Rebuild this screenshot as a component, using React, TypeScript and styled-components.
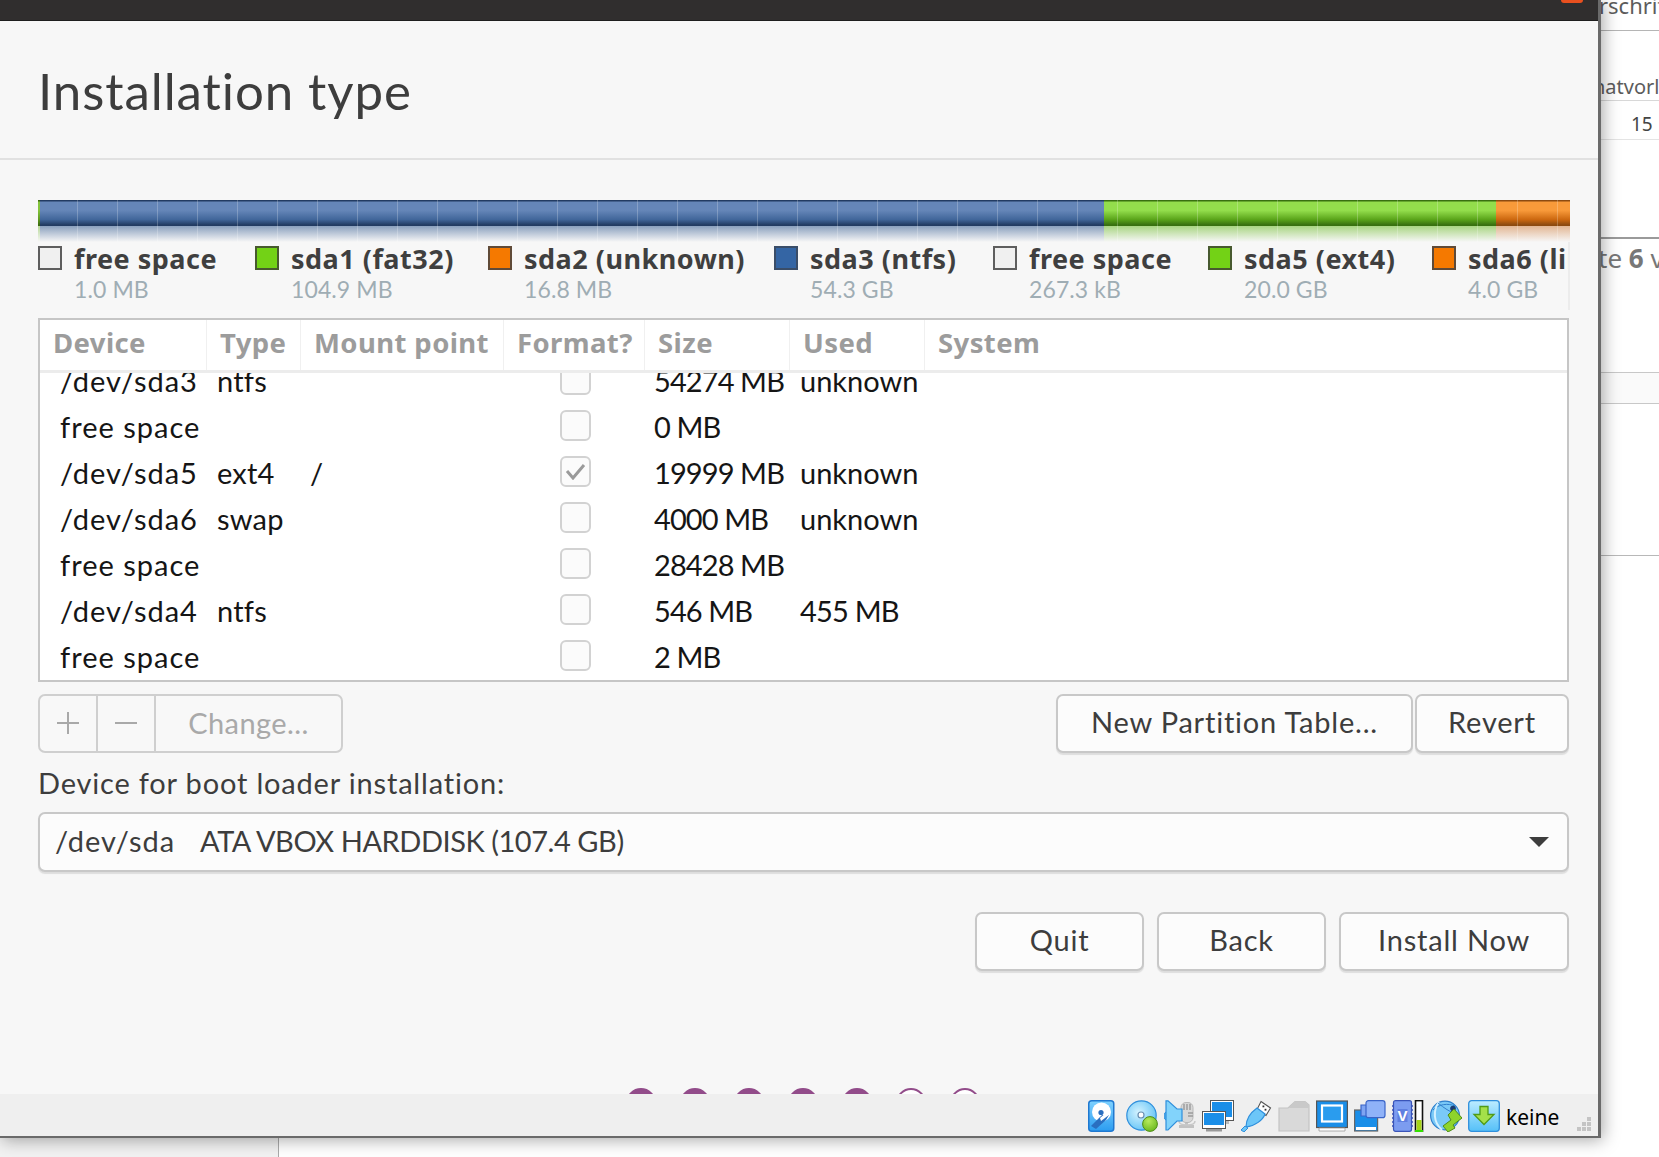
import React from "react";
import styled, { createGlobalStyle } from "styled-components";

const UI = `"Lato", "Noto Sans", sans-serif`;

const Global = createGlobalStyle`
  html, body { margin: 0; padding: 0; background: #fff; }
  body { font-family: ${UI}; overflow: hidden; }
`;

const Page = styled.div`
  width: 1659px;
  height: 1157px;
  display: flex;
  flex-direction: column;
  overflow: hidden;
`;
const Upper = styled.div`
  display: flex;
  height: 1138px;
`;
const Win = styled.div`
  position: relative;
  z-index: 2;
  width: 1598px;
  height: 1136px;
  flex: none;
  display: flex;
  flex-direction: column;
  background: #f7f7f7;
  border-right: 3px solid #6a6a6a;
  border-bottom: 2px solid #6a6a6a;
  box-shadow: 2px 2px 16px rgba(0, 0, 0, 0.35);
`;
const TitleBar = styled.div`
  height: 20px;
  flex: none;
  background: #302e2e;
  border-bottom: 1px solid #1e1e1e;
  display: flex;
  justify-content: flex-end;
  padding-right: 15px;
`;
const CloseHint = styled.div`
  width: 22px;
  height: 3px;
  background: #e8501f;
  border-radius: 0 0 11px 11px;
`;
const Header = styled.header`
  height: 137px;
  flex: none;
  padding-left: 38px;
  display: flex;
  align-items: center;
  border-bottom: 2px solid #e1e1e1;
  box-sizing: content-box;
`;
const Title = styled.h1`
  margin: 2px 0 0;
  font-size: 51px;
  font-weight: 400;
  color: #3d3d3d;
  letter-spacing: 0.92px;
  line-height: 60px;
`;
const Content = styled.main`
  flex: 1;
  display: flex;
  flex-direction: column;
  padding: 40px 29px 0 38px;
  min-height: 0;
`;

const Bar = styled.div`
  position: relative;
  height: 42px;
  flex: none;
  &::after {
    content: "";
    position: absolute;
    inset: 0;
    background: repeating-linear-gradient(
      to right,
      transparent 0,
      transparent 39px,
      rgba(255, 255, 255, 0.22) 39px,
      rgba(255, 255, 255, 0.22) 40px
    );
  }
`;
const BarRow = styled.div`
  display: flex;
  height: 26px;
`;
const ReflectRow = styled.div`
  display: flex;
  height: 16px;
`;
const BarSeg = styled.div<{ $w: number; $hi: string; $mid: string; $lo: string }>`
  width: ${(p) => p.$w}px;
  flex: none;
  background: linear-gradient(
    to bottom,
    ${(p) => p.$lo} 0,
    ${(p) => p.$lo} 1px,
    ${(p) => p.$hi} 2px,
    ${(p) => p.$hi} 40%,
    ${(p) => p.$mid} 75%,
    ${(p) => p.$lo} 96%,
    ${(p) => p.$lo} 100%
  );
`;
const ReflectSeg = styled.div<{ $w: number; $c: string }>`
  width: ${(p) => p.$w}px;
  flex: none;
  position: relative;
  background: ${(p) => p.$c};
  &::after {
    content: "";
    position: absolute;
    inset: 0;
    background: linear-gradient(to bottom, rgba(247, 247, 247, 0.3), #f7f7f7 100%);
  }
`;

const Legend = styled.div`
  display: flex;
  height: 64px;
  padding-top: 4px;
  flex: none;
  overflow: hidden;
  border-right: 2px solid #ececec;
  box-sizing: content-box;
  width: 1530px;
`;
const LegendItem = styled.div<{ $w: number }>`
  width: ${(p) => p.$w}px;
  flex: none;
  display: flex;
  gap: 12px;
`;
const Swatch = styled.div<{ $c: string; $edge: string }>`
  width: 24px;
  height: 24px;
  box-sizing: border-box;
  flex: none;
  background: ${(p) => p.$c};
  border: 2px solid ${(p) => p.$edge};
`;
const LegendText = styled.div`
  white-space: nowrap;
  display: flex;
  flex-direction: column;
  margin-top: -4px;
`;
const LegendName = styled.div`
  font-family: "Noto Sans", sans-serif;
  font-weight: 700;
  font-size: 27px;
  letter-spacing: 0.5px;
  line-height: 34px;
  color: #3f3f3f;
`;
const LegendSize = styled.div`
  font-size: 23px;
  letter-spacing: 0.1px;
  line-height: 32px;
  margin-top: -3px;
  color: #9fadb4;
`;

const TableBox = styled.div`
  margin-top: 8px;
  flex: none;
  height: 364px;
  box-sizing: border-box;
  background: #fff;
  border: 2px solid #c6c6c6;
  display: flex;
  flex-direction: column;
  width: 1531px;
`;
const columns = "167px 94px 203px 141px 145px 135px 1fr";
const HeadRow = styled.div`
  height: 50px;
  flex: none;
  display: grid;
  grid-template-columns: ${columns};
  border-bottom: 3px solid #ececec;
  position: relative;
  z-index: 1;
  background: #fff;
`;
const HeadCell = styled.div`
  font-family: "Noto Sans", sans-serif;
  font-weight: 700;
  font-size: 27.5px;
  letter-spacing: 0.4px;
  color: #9c9c9c;
  line-height: 46px;
  padding-left: 13px;
  border-right: 1px solid #f0f0f0;
  white-space: nowrap;
  overflow: hidden;
  &:last-child { border-right: 0; }
`;
const Rows = styled.div`
  flex: 1;
  min-height: 0;
  overflow: hidden;
`;
const RowsInner = styled.div`
  margin-top: -16px;
`;
const Row = styled.div`
  display: grid;
  grid-template-columns: ${columns};
  height: 46px;
  align-items: center;
  font-size: 29px;
  color: #151515;
`;
const Cell = styled.div<{ $pad: number; $ls?: number }>`
  padding-left: ${(p) => p.$pad}px;
  letter-spacing: ${(p) => p.$ls ?? 0}px;
  white-space: nowrap;
`;
const Check = styled.div`
  width: 31px;
  height: 31px;
  box-sizing: border-box;
  border: 2px solid #d2d2d2;
  border-radius: 6px;
  background: #fbfbfb;
  display: flex;
  align-items: center;
  justify-content: center;
  margin-top: -2px;
`;

const Tools = styled.div`
  margin-top: 12px;
  height: 59px;
  flex: none;
  display: flex;
  justify-content: space-between;
  width: 1531px;
`;
const Group = styled.div`
  display: flex;
  gap: 2px;
`;
const BtnGroup = styled.div`
  display: flex;
  width: 305px;
  box-sizing: border-box;
  border: 2px solid #cfcfcf;
  border-radius: 7px;
  background: #f8f8f8;
`;
const GroupPart = styled.div<{ $w?: number }>`
  ${(p) => (p.$w ? `width: ${p.$w}px; flex: none;` : "flex: 1;")}
  display: flex;
  align-items: center;
  justify-content: center;
  font-size: 29px;
  letter-spacing: 0.4px;
  padding-bottom: 2px;
  color: #a9a9a9;
  border-right: 2px solid #cfcfcf;
  &:last-child { border-right: 0; }
`;
const Btn = styled.button<{ $w: number }>`
  width: ${(p) => p.$w}px;
  box-sizing: border-box;
  height: 59px;
  padding: 0 0 4px;
  font-family: ${UI};
  font-size: 29px;
  letter-spacing: 0.8px;
  color: #3d3d3d;
  background: #fcfcfc;
  border: 2px solid #c8c8c8;
  border-radius: 7px;
  box-shadow: 0 2px 1px rgba(0, 0, 0, 0.1);
`;
const Label = styled.div`
  margin-top: 12px;
  height: 36px;
  line-height: 36px;
  font-size: 29px;
  letter-spacing: 0.82px;
  color: #3d3d3d;
`;
const Combo = styled.div`
  margin-top: 11px;
  width: 1531px;
  height: 60px;
  flex: none;
  box-sizing: border-box;
  display: flex;
  align-items: center;
  padding: 0 18px 3px 15px;
  border: 2px solid #c8c8c8;
  border-radius: 7px;
  background: #fcfcfc;
  box-shadow: 0 2px 1px rgba(0, 0, 0, 0.1);
  font-size: 29px;
  color: #3d3d3d;
`;
const ComboDev = styled.span`
  width: 145px;
  flex: none;
  letter-spacing: 1px;
`;
const ComboName = styled.span`
  flex: 1;
  letter-spacing: -0.45px;
`;
const Arrow = styled.div`
  width: 0;
  height: 0;
  margin-top: 3px;
  border-left: 10px solid transparent;
  border-right: 10px solid transparent;
  border-top: 10px solid #3d3d3d;
`;
const Nav = styled.div`
  margin-top: 40px;
  width: 1531px;
  display: flex;
  justify-content: flex-end;
  gap: 13px;
  flex: none;
`;
const Dots = styled.div`
  margin-top: auto;
  height: 6px;
  overflow: hidden;
  display: flex;
  gap: 24px;
  padding-left: 588px;
  flex: none;
`;
const Dot = styled.div<{ $on?: boolean }>`
  width: 30px;
  height: 30px;
  flex: none;
  border-radius: 50%;
  box-sizing: border-box;
  background: ${(p) => (p.$on ? "#924c8a" : "#fff")};
  border: 2px solid #924c8a;
`;
const Status = styled.footer`
  height: 42px;
  flex: none;
  background: #efefef;
  display: flex;
  align-items: center;
  justify-content: flex-end;
  gap: 6px;
  padding-right: 6px;
`;
const Slot = styled.svg`
  width: 32px;
  height: 32px;
  flex: none;
  margin-top: 2px;
`;
const Keine = styled.span`
  font-family: "Noto Sans", sans-serif;
  font-size: 21px;
  line-height: 30px;
  margin-top: 3px;
  color: #000;
  width: 51px;
  white-space: nowrap;
`;
const Grip = styled.svg`
  width: 16px;
  height: 16px;
  margin-left: 13px;
  align-self: flex-end;
  margin-bottom: 4px;
  flex: none;
`;

const Side = styled.aside`
  flex: 1;
  min-width: 0;
  overflow: hidden;
  display: flex;
  flex-direction: column;
  background: #fff;
  color: #5c5c5c;
  font-family: "Noto Sans", sans-serif;
  white-space: nowrap;
`;
const SideTop = styled.div`
  height: 30px;
  flex: none;
  border-bottom: 1px solid #b5b5b5;
  font-size: 22px;
  line-height: 26px;
  & > span { display: block; margin-left: -2px; margin-top: -8px; }
`;
const SideFmt = styled.div`
  height: 70px;
  flex: none;
  border-bottom: 1px solid #d8d8d8;
  font-size: 20px;
  display: flex;
  align-items: flex-end;
  box-sizing: border-box;
  & > span { margin-left: -8px; }
`;
const SideRuler = styled.div`
  margin-top: 5px;
  height: 34px;
  flex: none;
  border-bottom: 1px solid #e4e4e4;
  display: flex;
  align-items: center;
  font-size: 19px;
  color: #444;
  padding-left: 30px;
  padding-top: 2px;
  box-sizing: border-box;
`;
const SideGap = styled.div<{ $h: number }>`
  height: ${(p) => p.$h}px;
  flex: none;
`;
const SideRule = styled.div<{ $h: number; $c: string }>`
  height: ${(p) => p.$h}px;
  flex: none;
  background: ${(p) => p.$c};
`;
const SideHeading = styled.div`
  height: 42px;
  line-height: 38px;
  flex: none;
  font-size: 26px;
  color: #777;
  & > span { margin-left: -3px; }
  & b { font-weight: 700; }
`;
const SideBand = styled.div`
  height: 30px;
  flex: none;
  background: #fafafa;
`;
const Lower = styled.div`
  flex: 1;
  display: flex;
`;
const LowerLeft = styled.div`
  width: 278px;
  flex: none;
  background: #f2f2f2;
  border-right: 1px solid #aaa;
`;

const partitions = [
  { dev: "/dev/sda3", type: "ntfs", size: "54274 MB", used: "unknown" },
  { dev: "free space", size: "0 MB" },
  { dev: "/dev/sda5", type: "ext4", mount: "/", checked: true, size: "19999 MB", used: "unknown" },
  { dev: "/dev/sda6", type: "swap", size: "4000 MB", used: "unknown" },
  { dev: "free space", size: "28428 MB" },
  { dev: "/dev/sda4", type: "ntfs", size: "546 MB", used: "455 MB" },
  { dev: "free space", size: "2 MB" },
];

const FREE = { c: "#f0f0f0", e: "#5e5e5e" };
const GREEN = { c: "#73d216", e: "#47592f" };
const ORANGE = { c: "#f57900", e: "#5f4a38" };
const BLUE = { c: "#3465a4", e: "#3a4d68" };
const legend = [
  { name: "free space", size: "1.0 MB", w: 217, ...FREE },
  { name: "sda1 (fat32)", size: "104.9 MB", w: 233, ...GREEN },
  { name: "sda2 (unknown)", size: "16.8 MB", w: 286, ...ORANGE },
  { name: "sda3 (ntfs)", size: "54.3 GB", w: 219, ...BLUE },
  { name: "free space", size: "267.3 kB", w: 215, ...FREE },
  { name: "sda5 (ext4)", size: "20.0 GB", w: 224, ...GREEN },
  { name: "sda6 (linux-swap)", size: "4.0 GB", w: 300, ...ORANGE },
];

const segs = [
  { w: 2, hi: "#84c43c", mid: "#5f9a20", lo: "#3c6a10", re: "#9ccb70" },
  { w: 1064, hi: "#6586b8", mid: "#41669a", lo: "#223b62", re: "#5b7aa5" },
  { w: 392, hi: "#93de4c", mid: "#5aa41a", lo: "#387010", re: "#87c650" },
  { w: 74, hi: "#f89a3a", mid: "#cc6810", lo: "#8c4a10", re: "#d99a68" },
];

const numeric = (s?: string) => (s && /^\d/.test(s) ? -0.8 : 0);

const HdIcon = () => (
  <Slot viewBox="0 0 32 32">
    <defs>
      <linearGradient id="b1" x1="0" y1="0" x2="0" y2="1">
        <stop offset="0" stopColor="#7fd2ff" />
        <stop offset="1" stopColor="#2b9cf0" />
      </linearGradient>
    </defs>
    <rect x="0.75" y="0.75" width="25" height="30.5" rx="3" fill="url(#b1)" stroke="#1f78d0" strokeWidth="1.5" />
    <circle cx="13.5" cy="12" r="9.5" fill="#fff" />
    <circle cx="13" cy="12.5" r="2.6" fill="#2a6fc0" />
    <path d="M3 26 L14 15 L21 15 L18 20 L8 29 Z" fill="#2a6fc0" />
    <path d="M13 21 L21 15 L19 12 L12 18 Z" fill="#fff" />
  </Slot>
);
const CdIcon = () => (
  <Slot viewBox="0 0 32 32">
    <defs>
      <radialGradient id="cd1" cx="0.4" cy="0.4" r="0.7">
        <stop offset="0" stopColor="#d4f3ff" />
        <stop offset="1" stopColor="#5dc0f5" />
      </radialGradient>
      <radialGradient id="g1" cx="0.4" cy="0.3" r="0.8">
        <stop offset="0" stopColor="#b6ea5c" />
        <stop offset="1" stopColor="#64b41a" />
      </radialGradient>
    </defs>
    <circle cx="15.5" cy="15.5" r="14.7" fill="url(#cd1)" stroke="#2f8fdc" strokeWidth="1.2" />
    <circle cx="15" cy="15" r="3" fill="#fff" stroke="#6a8fb0" strokeWidth="1.2" />
    <circle cx="24" cy="24" r="7.4" fill="url(#g1)" stroke="#4e8d18" />
  </Slot>
);
const AudioIcon = () => (
  <Slot viewBox="0 0 32 32">
    <rect x="17" y="2.5" width="12" height="20" rx="5" fill="#d8d8d8" stroke="#b8b8b8" />
    <path d="M20 4v6M23 4v6M26 4v6M24 13h5M24 16h5" stroke="#9a9a9a" strokeWidth="1.4" />
    <path d="M15 25h15v3H15z M21 23h3v3h-3z" fill="#c2c2c2" />
    <path d="M15 21c0 3 4 4 8 4s8-1 8-4" fill="none" stroke="#c8c8c8" strokeWidth="1.5" />
    <path d="M2 12 L0.7 13 V19 L2 20 H4 Z" fill="#5cc0f7" stroke="#2f8fdc" />
    <path d="M2 0.8 L4 0.8 L13 9 H18 V21 H13 L4 30 H2 Z" fill="#82d3fb" stroke="#2f8fdc" strokeWidth="1.2" />
  </Slot>
);
const Monitor = ({ x, y, w, h }: { x: number; y: number; w: number; h: number }) => (
  <>
    <rect x={x} y={y} width={w} height={h} fill="#fff" stroke="#555" strokeWidth="1" />
    <rect x={x + 1.5} y={y + 1.5} width={w - 3} height={h - 5} fill="#1a8ee8" />
  </>
);
const NetIcon = () => (
  <Slot viewBox="0 0 32 32">
    <Monitor x={8.5} y={0.5} w={23} h={20} />
    <path d="M12 21h15v3H12z" fill="#bbb" />
    <Monitor x={0.5} y={11.5} w={23} h={17} />
    <path d="M4 29h16v2.5H4z" fill="#999" />
  </Slot>
);
const UsbIcon = () => (
  <Slot viewBox="0 0 32 32">
    <path d="M21 1.5 L30.5 8 L26 15.5 L17 9.5 Z" fill="#fff" stroke="#555" strokeWidth="1.1" />
    <rect x="22.5" y="5.5" width="1.8" height="1.8" fill="#333" />
    <rect x="24.6" y="8.8" width="1.8" height="1.8" fill="#333" />
    <path d="M17 8 L25 14 C23 20 15 26 6 27 C6 20 10 13 17 8 Z" fill="#6cc6f8" stroke="#2f8fdc" strokeWidth="1.2" />
    <path d="M5 26 L8 28 L4 32 L1 30 Z" fill="#6cc6f8" stroke="#2f8fdc" />
  </Slot>
);
const FolderIcon = () => (
  <Slot viewBox="0 0 32 32">
    <path d="M1 8 L10 8 L17 1.5 H27 L31 5 V31 H1 Z" fill="#d9d9d9" stroke="#c4c4c4" strokeWidth="1.2" />
    <path d="M17 1.5 H27 L31 5 V8 H10 Z" fill="#c9c9c9" />
  </Slot>
);
const DisplayIcon = () => (
  <Slot viewBox="0 0 32 32">
    <rect x="0.6" y="1" width="30.8" height="26.5" fill="#1a8ee8" stroke="#555" strokeWidth="1.2" />
    <rect x="6" y="5.5" width="20" height="16" fill="#2a9cee" stroke="#fff" strokeWidth="2.2" />
    <path d="M3 28h26v3H3z" fill="#fff" stroke="#999" strokeWidth="0.8" />
  </Slot>
);
const CaptureIcon = () => (
  <Slot viewBox="0 0 32 32">
    <rect x="0.6" y="10" width="23" height="21" fill="#1a8ee8" stroke="#666" strokeWidth="1.2" />
    <rect x="2" y="27" width="20" height="3" fill="#fff" />
    <path d="M7 5 L13 5 V16 H7 Z" fill="#7ea4f2" stroke="#3a64c8" strokeWidth="1.2" />
    <rect x="12" y="0.7" width="19" height="17" rx="2.5" fill="#8fb2f8" stroke="#3a64c8" strokeWidth="1.2" />
  </Slot>
);
const ChipIcon = () => (
  <Slot viewBox="0 0 32 32">
    <rect x="1.5" y="0.7" width="18" height="30.6" rx="2" fill="#7c9cf0" stroke="#3a54b8" strokeWidth="1.2" />
    <path d="M0 6h1.5M0 10h1.5M0 14h1.5M0 18h1.5M0 22h1.5M0 26h1.5M19.5 6h1.5M19.5 10h1.5M19.5 14h1.5M19.5 18h1.5M19.5 22h1.5M19.5 26h1.5" stroke="#3a54b8" strokeWidth="1.4" />
    <rect x="5.5" y="9" width="10" height="13" fill="#5f7fe0" />
    <text x="10.5" y="21" textAnchor="middle" fontFamily="Liberation Sans, sans-serif" fontWeight="700" fontSize="15" fill="#fff">V</text>
    <rect x="23.5" y="0.6" width="7" height="30.8" fill="#fff" stroke="#111" strokeWidth="1.6" />
    <rect x="24.5" y="20" width="5" height="10.5" fill="#a6d416" />
    <rect x="23" y="30" width="8" height="2" fill="#33e000" />
  </Slot>
);
const GlobeIcon = () => (
  <Slot viewBox="0 0 32 32">
    <circle cx="15" cy="15.5" r="14.4" fill="#7ac9f7" stroke="#2f7fcc" strokeWidth="1.2" />
    <path d="M3 10 C9 4 18 3 25 6" fill="none" stroke="#2f7fcc" />
    <path d="M9 2 C3 10 3 22 12 30" fill="none" stroke="#d6f1ff" strokeWidth="2" />
    <path d="M8 3 C14 8 20 12 26 14" fill="none" stroke="#2f7fcc" />
    <circle cx="23" cy="8.5" r="2.8" fill="#1c3c70" />
    <path d="M24 9 L32 18 L23 25 L25 28 L18 32 L13 26 L21 20 L18 15 Z" fill="#8ed42c" stroke="#4f8c18" />
  </Slot>
);
const DownIcon = () => (
  <Slot viewBox="0 0 32 32">
    <defs>
      <linearGradient id="dl" x1="0" y1="0" x2="0" y2="1">
        <stop offset="0" stopColor="#bcecff" />
        <stop offset="1" stopColor="#55c0f8" />
      </linearGradient>
    </defs>
    <rect x="0.7" y="0.7" width="30.6" height="30.6" rx="3" fill="url(#dl)" stroke="#2f8fdc" strokeWidth="1.3" />
    <path d="M12 6.5 H20 V14.5 H26 L16 24.5 L6 14.5 H12 Z" fill="#a4e04a" stroke="#4f9a18" strokeWidth="1.3" />
  </Slot>
);

export default function App() {
  return (
    <>
      <Global />
      <Page>
        <Upper>
          <Win>
            <TitleBar>
              <CloseHint />
            </TitleBar>
            <Header>
              <Title>Installation type</Title>
            </Header>
            <Content>
              <Bar>
                <BarRow>
                  {segs.map((s, i) => (
                    <BarSeg key={i} $w={s.w} $hi={s.hi} $mid={s.mid} $lo={s.lo} />
                  ))}
                </BarRow>
                <ReflectRow>
                  {segs.map((s, i) => (
                    <ReflectSeg key={i} $w={s.w} $c={s.re} />
                  ))}
                </ReflectRow>
              </Bar>
              <Legend>
                {legend.map((l, i) => (
                  <LegendItem key={i} $w={l.w}>
                    <Swatch $c={l.c} $edge={l.e} />
                    <LegendText>
                      <LegendName>{l.name}</LegendName>
                      <LegendSize>{l.size}</LegendSize>
                    </LegendText>
                  </LegendItem>
                ))}
              </Legend>
              <TableBox>
                <HeadRow>
                  {["Device", "Type", "Mount point", "Format?", "Size", "Used", "System"].map((h) => (
                    <HeadCell key={h}>{h}</HeadCell>
                  ))}
                </HeadRow>
                <Rows>
                  <RowsInner>
                    {partitions.map((p, i) => (
                      <Row key={i}>
                        <Cell $pad={20} $ls={1}>{p.dev}</Cell>
                        <Cell $pad={10} $ls={0.2}>{p.type}</Cell>
                        <Cell $pad={9}>{p.mount}</Cell>
                        <Cell $pad={56}>
                          <Check>
                            {p.checked && (
                              <svg width="21" height="17" viewBox="0 0 21 17">
                                <path d="M2 8 L8 15 L19 2" fill="none" stroke="#9a9a9a" strokeWidth="3" />
                              </svg>
                            )}
                          </Check>
                        </Cell>
                        <Cell $pad={9} $ls={-0.9}>{p.size}</Cell>
                        <Cell $pad={10} $ls={numeric(p.used)}>{p.used}</Cell>
                        <Cell $pad={0} />
                      </Row>
                    ))}
                  </RowsInner>
                </Rows>
              </TableBox>
              <Tools>
                <BtnGroup>
                  <GroupPart $w={56}>
                    <svg width="24" height="24" viewBox="0 0 24 24">
                      <path d="M12 1V23M1 12H23" stroke="#a9a9a9" strokeWidth="2" />
                    </svg>
                  </GroupPart>
                  <GroupPart $w={56}>
                    <svg width="24" height="24" viewBox="0 0 24 24">
                      <path d="M1 12H23" stroke="#a9a9a9" strokeWidth="2" />
                    </svg>
                  </GroupPart>
                  <GroupPart>Change...</GroupPart>
                </BtnGroup>
                <Group>
                  <Btn $w={357}>New Partition Table...</Btn>
                  <Btn $w={154}>Revert</Btn>
                </Group>
              </Tools>
              <Label>Device for boot loader installation:</Label>
              <Combo>
                <ComboDev>/dev/sda</ComboDev>
                <ComboName>ATA VBOX HARDDISK (107.4 GB)</ComboName>
                <Arrow />
              </Combo>
              <Nav>
                <Btn $w={169}>Quit</Btn>
                <Btn $w={169}>Back</Btn>
                <Btn $w={230}>Install Now</Btn>
              </Nav>
              <Dots>
                {[1, 1, 1, 1, 1, 0, 0].map((on, i) => (
                  <Dot key={i} $on={!!on} />
                ))}
              </Dots>
            </Content>
            <Status>
              <HdIcon />
              <CdIcon />
              <AudioIcon />
              <NetIcon />
              <UsbIcon />
              <FolderIcon />
              <DisplayIcon />
              <CaptureIcon />
              <ChipIcon />
              <GlobeIcon />
              <DownIcon />
              <Keine>keine</Keine>
              <Grip viewBox="0 0 16 16">
                <path d="M11 1h4v4h-4zM6 6h4v4H6zM11 6h4v4h-4zM1 11h4v4H1zM6 11h4v4H6zM11 11h4v4h-4z" fill="#c4c4c4" />
              </Grip>
            </Status>
          </Win>
          <Side>
            <SideTop>
              <span>rschrift</span>
            </SideTop>
            <SideFmt>
              <span>natvorlage</span>
            </SideFmt>
            <SideRuler>15</SideRuler>
            <SideGap $h={97} />
            <SideRule $h={2} $c="#9a9a9a" />
            <SideHeading>
              <span>
                te <b>6</b> von
              </span>
            </SideHeading>
            <SideGap $h={91} />
            <SideRule $h={1} $c="#c8c8c8" />
            <SideBand />
            <SideRule $h={1} $c="#c8c8c8" />
            <SideGap $h={151} />
            <SideRule $h={1} $c="#b8b8b8" />
          </Side>
        </Upper>
        <Lower>
          <LowerLeft />
        </Lower>
      </Page>
    </>
  );
}
